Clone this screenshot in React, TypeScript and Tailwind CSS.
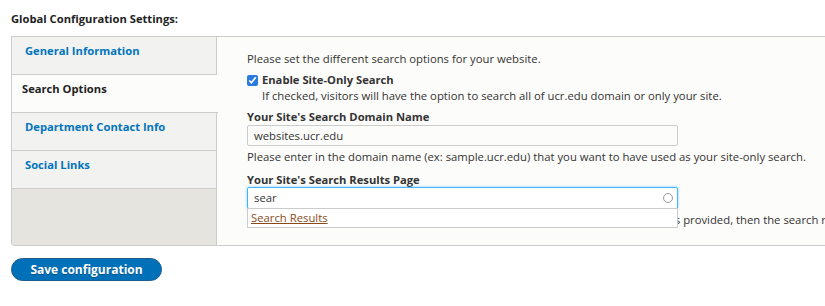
import { useState } from 'react'

const tabs = ['General Information', 'Search Options', 'Department Contact Info', 'Social Links']

export default function App() {
  const [active, setActive] = useState(1)

  return (
    <div
      className="h-[306px] w-[825px] overflow-hidden bg-white text-[11.3px] text-[#333]"
      style={{ fontFamily: '"Open Sans", "Liberation Sans", sans-serif' }}
    >
      <div className="pl-[11px] pt-[11px]">
        <h2 className="text-[11.2px] font-bold leading-[16px] text-[#222]">Global Configuration Settings:</h2>

        <div className="mt-[9px] flex h-[210px] w-[830px] overflow-hidden rounded-bl-[4px] border border-r-0 border-[#ccc] bg-[#fcfcfa]">
          {/* tab list */}
          <ul className="w-[205px] shrink-0 bg-[#e6e4df] text-[11.2px]">
            {tabs.map((t, i) => (
              <li
                key={t}
                onClick={() => setActive(i)}
                className={
                  i === active
                    ? 'relative -mr-px h-[38px] border-b border-[#ccc] bg-[#fcfcfa] pl-[10px] pt-[6px] font-bold text-[#222]'
                    : 'h-[38px] border-b border-r border-[#ccc] bg-[#f2f2f0] pl-[13px] pt-[6px] font-bold text-[#0074bd]'
                }
              >
                {t}
              </li>
            ))}
            <li className="h-[60px] border-r border-[#ccc]" />
          </ul>

          {/* pane */}
          <div className="flex-1 pl-[30px] pt-[13px]">
            <p className="leading-[18px]">Please set the different search options for your website.</p>

            <div className="mt-[4px]">
              <label className="flex items-center gap-[4px] text-[11.2px] font-bold leading-[16px]">
                <input type="checkbox" defaultChecked className="h-[11px] w-[11px] accent-[#2a7ae2]" />
                Enable Site-Only Search
              </label>
              <p className="pl-[15px] leading-[16px]">
                If checked, visitors will have the option to search all of ucr.edu domain or only your site.
              </p>
            </div>

            <div className="mt-[6px]">
              <label className="block text-[11.2px] font-bold leading-[14px]">Your Site's Search Domain Name</label>
              <div className="mt-[1px] h-[21px] w-[431px] rounded-[2px] border border-[#ccc] bg-[#fcfcfa] pl-[6px] leading-[19px]">
                websites.ucr.edu
              </div>
              <p className="mt-[3px] leading-[16px]">
                Please enter in the domain name (ex: sample.ucr.edu) that you want to have used as your site-only search.
              </p>
            </div>

            <div className="mt-[8px]">
              <label className="block text-[11.2px] font-bold leading-[14px]">Your Site's Search Results Page</label>
              <div className="relative">
                <div className="flex h-[22px] w-[431px] items-center justify-between rounded-[2px] border border-[#40b6ff] bg-white pl-[6px] pr-[4px] shadow-[0_0_3px_rgba(64,182,255,0.6)]">
                  <span>sear</span>
                  <span className="h-[10px] w-[10px] rounded-full border-[1.5px] border-[#999]" />
                </div>
                <p className="mt-[3px] whitespace-nowrap leading-[16px]">
                  Please enter the path to your site's search results page. If no search results page is provided, then the search results will be shown on the default page.
                </p>
                <div className="absolute left-0 top-[21px] h-[20px] w-[431px] border border-[#ccc] bg-white pl-[3px] leading-[18px]">
                  <a href="#" className="text-[#8a4a1a] underline">Search Results</a>
                </div>
              </div>
            </div>
          </div>
        </div>

        <button className="mt-[12px] h-[23px] w-[151px] rounded-[12px] border border-[#1e5c90] bg-[#0071b8] text-[12px] font-bold text-white [text-shadow:0_1px_rgba(0,0,0,0.3)]">
          Save configuration
        </button>
      </div>
    </div>
  )
}
